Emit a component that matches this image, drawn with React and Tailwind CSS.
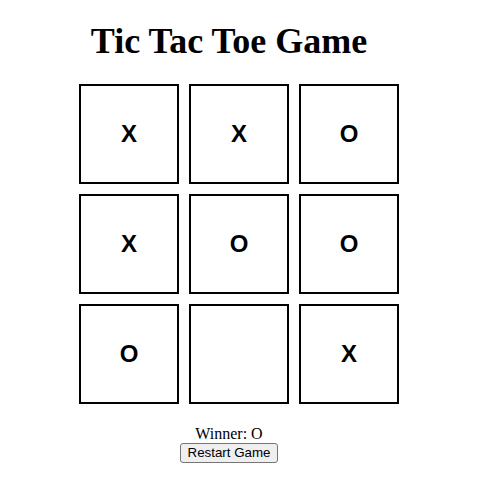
import { useState } from "react";

const initial = ["X", "X", "O", "X", "O", "O", "O", "", "X"];

export default function App() {
  const [board, setBoard] = useState(initial);

  return (
    <div className="w-[458px] bg-white flex flex-col items-center">
      <h1 className="mt-[21px] mb-[22px] text-[36px] leading-[41px] font-bold text-black [font-family:'Liberation_Serif',serif]">
        Tic Tac Toe Game
      </h1>
      <div className="ml-[20px] grid grid-cols-[100px_100px_100px] gap-[10px]">
        {board.map((cell, index) => (
          <div
            key={index}
            className="w-[100px] h-[100px] border-2 border-black flex items-center justify-center text-[24px] font-bold text-black [font-family:'Liberation_Sans',sans-serif]"
          >
            {cell}
          </div>
        ))}
      </div>
      <div className="mt-[21px] text-[16px] leading-[18px] text-black [font-family:'Liberation_Serif',serif]">
        Winner: O
      </div>
      <button
        onClick={() => setBoard(Array(9).fill(""))}
        className="px-[7px] py-[1px] text-[13.33px] leading-[16px] text-black bg-[#efefef] border border-[#767676] rounded-[3px] [font-family:'Liberation_Sans',sans-serif]"
      >
        Restart Game
      </button>
    </div>
  );
}
